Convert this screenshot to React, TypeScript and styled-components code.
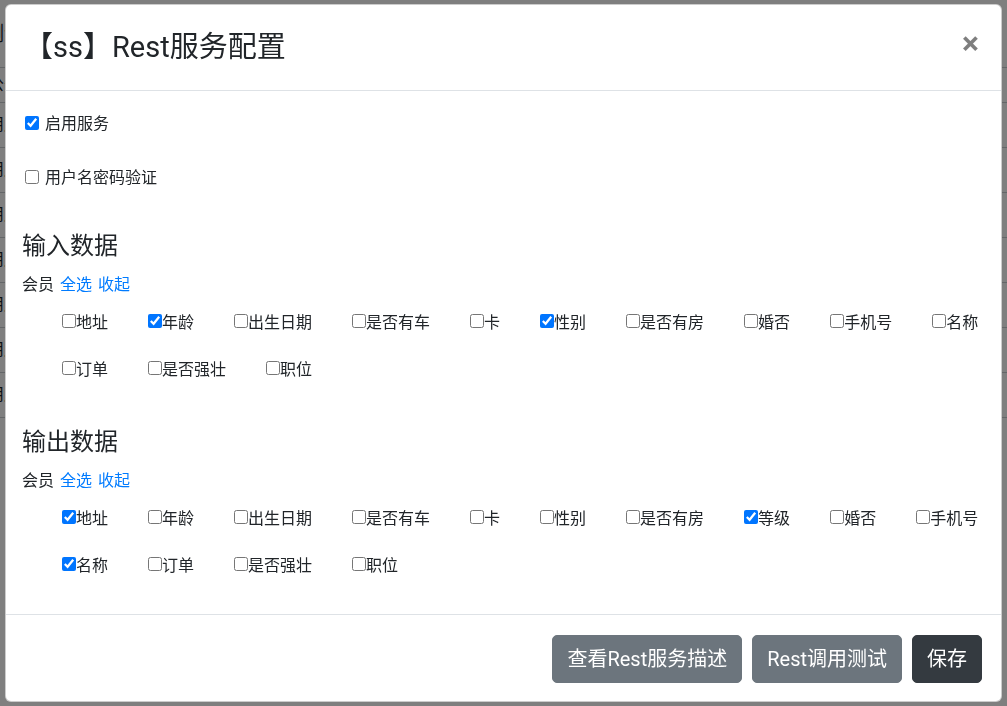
import styled, { createGlobalStyle } from "styled-components";

const GlobalStyle = createGlobalStyle`
  html, body {
    margin: 0;
    padding: 0;
  }
  * {
    box-sizing: border-box;
  }
  body {
    font-family: "Segoe UI", Roboto, "Noto Sans CJK SC", sans-serif;
    font-size: 16px;
    line-height: 1.5;
    color: #212529;
    background: #fff;
    overflow: hidden;
  }
`;

type Field = { name: string; checked?: boolean };

const inputFields: Field[] = [
  { name: "地址" },
  { name: "年龄", checked: true },
  { name: "出生日期" },
  { name: "是否有车" },
  { name: "卡" },
  { name: "性别", checked: true },
  { name: "是否有房" },
  { name: "婚否" },
  { name: "手机号" },
  { name: "名称" },
  { name: "订单" },
  { name: "是否强壮" },
  { name: "职位" },
];

const outputFields: Field[] = [
  { name: "地址", checked: true },
  { name: "年龄" },
  { name: "出生日期" },
  { name: "是否有车" },
  { name: "卡" },
  { name: "性别" },
  { name: "是否有房" },
  { name: "等级", checked: true },
  { name: "婚否" },
  { name: "手机号" },
  { name: "名称", checked: true },
  { name: "订单" },
  { name: "是否强壮" },
  { name: "职位" },
];

const bgRows = ["用户管理", "用户列表", "用户分组", "用户标签", "用户积分", "用户等级", "用户配置"];

function FieldSection({ title, fields }: { title: string; fields: Field[] }) {
  return (
    <Section>
      <Heading>{title}</Heading>
      <MemberRow>
        <span>会员</span>
        <Link href="#">全选</Link>
        <Link href="#">收起</Link>
      </MemberRow>
      <FieldGrid>
        {fields.map((f) => (
          <FieldOption key={f.name}>
            <FieldBox defaultChecked={f.checked} />
            {f.name}
          </FieldOption>
        ))}
      </FieldGrid>
    </Section>
  );
}

export default function App() {
  return (
    <>
      <GlobalStyle />
      <Page>
        <TopBar>
          <PageTitle>测试</PageTitle>
          <SearchMark>(</SearchMark>
        </TopBar>
        <BgHead>公告</BgHead>
        {bgRows.map((r) => (
          <BgRow key={r}>{r}</BgRow>
        ))}
      </Page>
      <Backdrop />
      <Modal>
        <Header>
          <Title>【ss】Rest服务配置</Title>
          <Close>×</Close>
        </Header>
        <Body>
          <CheckRow>
            <CheckBox defaultChecked />
            启用服务
          </CheckRow>
          <CheckRow $gap>
            <CheckBox />
            用户名密码验证
          </CheckRow>
          <FieldSection title="输入数据" fields={inputFields} />
          <FieldSection title="输出数据" fields={outputFields} />
        </Body>
        <Footer>
          <Button $variant="secondary">查看Rest服务描述</Button>
          <Button $variant="secondary">Rest调用测试</Button>
          <Button $variant="dark">保存</Button>
        </Footer>
      </Modal>
    </>
  );
}

const Page = styled.div`
  width: 1007px;
  height: 706px;
  overflow: hidden;
`;
const TopBar = styled.div`
  display: flex;
  justify-content: space-between;
  align-items: center;
  height: 68px;
  border-bottom: 1px solid #c8ccd0;
`;
const PageTitle = styled.span`
  margin-left: -16px;
  font-size: 20px;
`;
const SearchMark = styled.span`
  margin-right: -8px;
  margin-top: -32px;
  font-size: 22px;
  color: #0b2f6b;
`;
const BgHead = styled.div`
  display: flex;
  align-items: center;
  height: 35px;
  margin-left: -12px;
  border-bottom: 1px solid #c8ccd0;
  font-size: 16px;
`;
const BgRow = styled.div`
  display: flex;
  align-items: center;
  height: 45px;
  margin-left: -12px;
  border-bottom: 1px solid #c8ccd0;
  font-size: 16px;
`;
const Backdrop = styled.div`
  position: fixed;
  inset: 0;
  background: rgba(0, 0, 0, 0.5);
`;
const Modal = styled.div`
  position: fixed;
  top: 4px;
  left: 5px;
  width: 997px;
  display: flex;
  flex-direction: column;
  background: #fff;
  border: 1px solid rgba(0, 0, 0, 0.2);
  border-radius: 6px;
`;
const Header = styled.div`
  display: flex;
  justify-content: space-between;
  align-items: center;
  height: 86px;
  padding: 0 22px 0 18px;
  border-bottom: 1px solid #dee2e6;
`;
const Title = styled.h3`
  margin: 0;
  font-size: 29px;
  font-weight: 400;
  line-height: 1.2;
`;
const Close = styled.button`
  margin-top: -10px;
  padding: 0;
  border: 0;
  background: none;
  font-family: "Segoe UI", Roboto, "Noto Sans CJK SC", sans-serif;
  font-size: 32px;
  font-weight: 700;
  line-height: 1;
  color: #000;
  opacity: 0.5;
  cursor: pointer;
`;
const Body = styled.div`
  padding: 21px 16px 36px;
`;
const CheckRow = styled.label<{ $gap?: boolean }>`
  display: flex;
  align-items: center;
  height: 24px;
  margin-top: ${(p) => (p.$gap ? "30px" : "0")};
  margin-bottom: ${(p) => (p.$gap ? "42px" : "0")};
`;
const CheckBox = styled.input.attrs({ type: "checkbox" })`
  width: 14px;
  height: 14px;
  margin: 0 6px 2px 3px;
`;
const Section = styled.div`
  & + & {
    margin-top: 46px;
  }
`;
const Heading = styled.h4`
  margin: 0 0 12px;
  font-size: 24px;
  font-weight: 400;
  line-height: 1.2;
`;
const MemberRow = styled.div`
  display: flex;
  align-items: center;
  gap: 6px;
  height: 24px;
  margin-bottom: 14px;
`;
const Link = styled.a`
  color: #007bff;
  text-decoration: none;
`;
const FieldGrid = styled.div`
  display: flex;
  flex-wrap: wrap;
  column-gap: 40px;
  row-gap: 23px;
  padding-left: 40px;
`;
const FieldOption = styled.label`
  display: inline-flex;
  align-items: center;
  height: 24px;
  white-space: nowrap;
`;
const FieldBox = styled.input.attrs({ type: "checkbox" })`
  width: 14px;
  height: 14px;
  margin: 0 0 3px 0;
`;
const Footer = styled.div`
  display: flex;
  justify-content: flex-end;
  gap: 10px;
  padding: 20px 19px 18px;
  border-top: 1px solid #dee2e6;
`;
const Button = styled.button<{ $variant: "secondary" | "dark" }>`
  padding: 8px 14px;
  border: 1px solid ${(p) => (p.$variant === "dark" ? "#343a40" : "#6c757d")};
  border-radius: 5px;
  background: ${(p) => (p.$variant === "dark" ? "#343a40" : "#6c757d")};
  color: #fff;
  font-family: "Segoe UI", Roboto, "Noto Sans CJK SC", sans-serif;
  font-size: 20px;
  line-height: 1.5;
  cursor: pointer;
`;
